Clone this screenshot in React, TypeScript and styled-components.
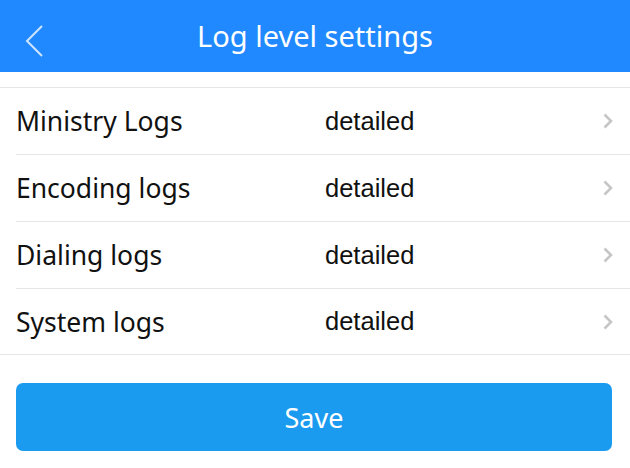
import React from "react";
import styled, { createGlobalStyle } from "styled-components";

const Global = createGlobalStyle`
  html, body { margin: 0; padding: 0; background: #fff; }
  body { font-family: "Noto Sans", "Open Sans", sans-serif; }
  * { box-sizing: border-box; }
`;

const Page = styled.div`
  width: 630px;
  height: 468px;
  background: #fff;
  display: flex;
  flex-direction: column;
`;

const Header = styled.header`
  height: 72px;
  background: #2189ff;
  display: grid;
  grid-template-columns: 60px 1fr 60px;
  align-items: center;
  color: #fff;
`;

const BackButton = styled.button`
  border: 0;
  background: transparent;
  padding: 10px 0 0 24px;
  display: flex;
  align-items: center;
  height: 100%;
  cursor: pointer;
`;

const Title = styled.h1`
  margin: 0 0 2px;
  text-align: center;
  font-size: 29px;
  font-weight: 400;
  font-family: "Noto Sans", "Open Sans", sans-serif;
`;

const List = styled.ul`
  list-style: none;
  margin: 15px 0 0;
  padding: 0;
  border-top: 1px solid #e6e6e6;
  border-bottom: 1px solid #e6e6e6;
`;

const Row = styled.li<{ $last?: boolean }>`
  height: ${(p) => (p.$last ? 65 : 67)}px;
  margin-left: 16px;
  padding-right: 16px;
  display: grid;
  grid-template-columns: 309px 1fr auto;
  align-items: center;
  border-bottom: ${(p) => (p.$last ? "0" : "1px solid #e6e6e6")};
`;

const Label = styled.span`
  font-size: 26.5px;
  color: #111;
  font-family: "Noto Sans", "Open Sans", sans-serif;
`;

const Value = styled.span`
  font-size: 25.5px;
  color: #111;
  font-family: "Liberation Sans", Arial, sans-serif;
`;

const Footer = styled.div`
  padding: 28px 18px 0 16px;
`;

const SaveButton = styled.button`
  width: 100%;
  height: 68px;
  border: 0;
  border-radius: 7px;
  background: #1b9bf0;
  color: #fff;
  font-size: 27px;
  font-family: "Noto Sans", "Open Sans", sans-serif;
  cursor: pointer;
`;

const Chevron = () => (
  <svg width="12" height="18" viewBox="0 0 12 18">
    <path d="M2.5 2.5 L9 9 L2.5 15.5" fill="none" stroke="#c6c6c6" strokeWidth="2.6" />
  </svg>
);

const BackIcon = () => (
  <svg width="20" height="32" viewBox="0 0 20 32">
    <path d="M18 1 L3 16 L18 31" fill="none" stroke="#cfe4ff" strokeWidth="2" />
  </svg>
);

const rows = ["Ministry Logs", "Encoding logs", "Dialing logs", "System logs"];

export default function App() {
  return (
    <>
      <Global />
      <Page>
        <Header>
          <BackButton aria-label="back">
            <BackIcon />
          </BackButton>
          <Title>Log level settings</Title>
          <span />
        </Header>
        <List>
          {rows.map((r, i) => (
            <Row key={r} $last={i === rows.length - 1}>
              <Label>{r}</Label>
              <Value>detailed</Value>
              <Chevron />
            </Row>
          ))}
        </List>
        <Footer>
          <SaveButton>Save</SaveButton>
        </Footer>
      </Page>
    </>
  );
}
